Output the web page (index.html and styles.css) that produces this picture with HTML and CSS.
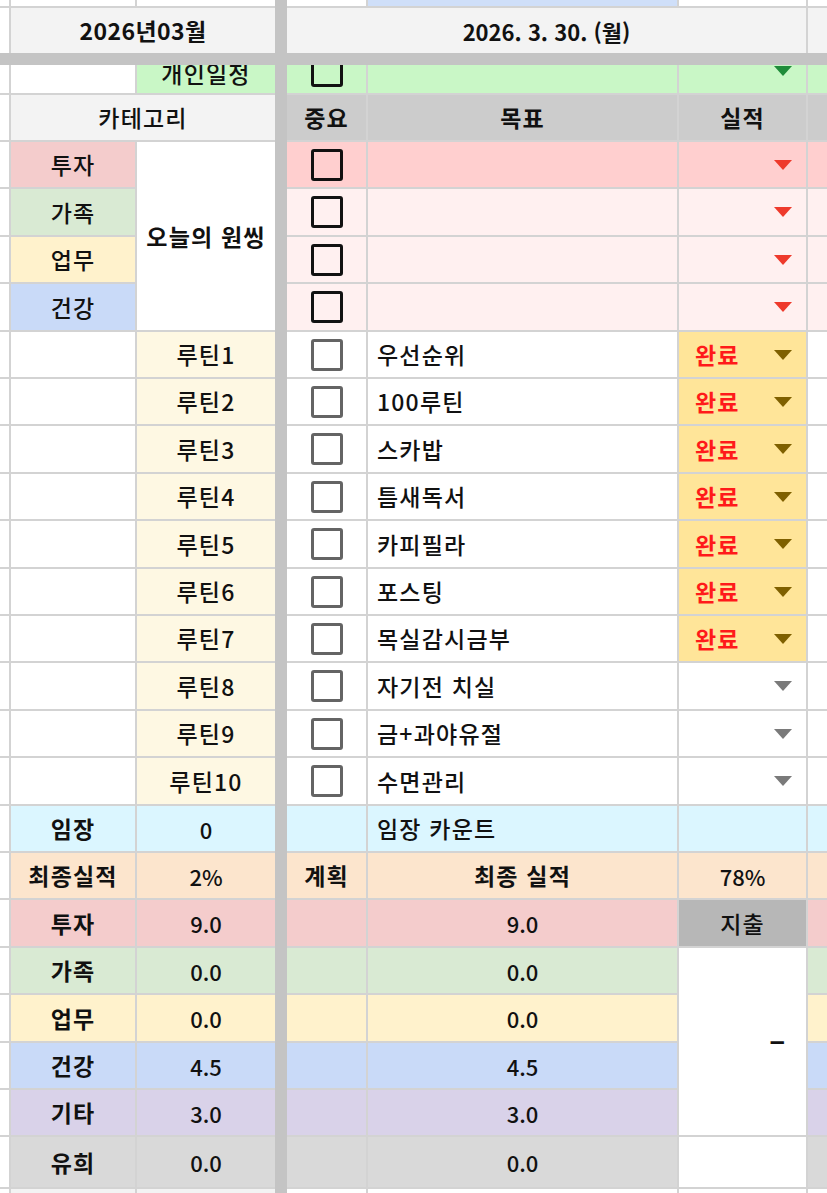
FILE: index.html
```html
<!DOCTYPE html>
<html lang="ko">
<head>
<meta charset="utf-8">
<title>2026년03월</title>
<link rel="stylesheet" href="styles.css">
</head>
<body>
<div class="sheet">
  <div class="vbar"></div>
  <div class="hbar"></div>

  <!-- partial top row -->
  <div class="c w"></div><div class="c w"></div><div class="c w"></div>
  <div class="c w"></div><div class="c bl"></div><div class="c w"></div><div class="c w"></div>

  <!-- header -->
  <div class="c w"></div>
  <div class="c lg b ctr s2 hdt">2026년03월</div>
  <div class="c lg b ctr s3 n">2026. 3. 30. (월)</div>
  <div class="c lg"></div>

  <!-- 개인일정 (partly scrolled) -->
  <div class="c w"></div>
  <div class="c w"></div>
  <div class="c gn cut"><div class="sh t ctr">개인일정</div></div>
  <div class="c gn cut"><div class="sh ctr"><span class="cb"></span></div></div>
  <div class="c gn"></div>
  <div class="c gn cut"><div class="sh"><span class="dd ddg"></span></div></div>
  <div class="c gn"></div>

  <!-- 카테고리 header -->
  <div class="c w"></div>
  <div class="c lg ctr s2">카테고리</div>
  <div class="c hd b ctr">중요</div>
  <div class="c hd b ctr">목표</div>
  <div class="c hd b ctr">실적</div>
  <div class="c hd"></div>

  <!-- one thing -->
  <div class="c w"></div>
  <div class="c tz ctr">투자</div>
  <div class="c w b ctr r4">오늘의 원씽</div>
  <div class="c tz2 ctr"><span class="cb"></span></div>
  <div class="c tz2"></div>
  <div class="c tz2"><span class="dd ddr"></span></div>
  <div class="c tz2"></div>

  <div class="c w"></div>
  <div class="c fm ctr">가족</div>
  <div class="c pk ctr"><span class="cb"></span></div>
  <div class="c pk"></div>
  <div class="c pk"><span class="dd ddr"></span></div>
  <div class="c pk"></div>

  <div class="c w"></div>
  <div class="c wk ctr">업무</div>
  <div class="c pk ctr"><span class="cb"></span></div>
  <div class="c pk"></div>
  <div class="c pk"><span class="dd ddr"></span></div>
  <div class="c pk"></div>

  <div class="c w"></div>
  <div class="c ht ctr">건강</div>
  <div class="c pk ctr"><span class="cb"></span></div>
  <div class="c pk"></div>
  <div class="c pk"><span class="dd ddr"></span></div>
  <div class="c pk"></div>

  <!-- routines -->
  <div class="c w"></div><div class="c w"></div>
  <div class="c cr ctr">루틴1</div>
  <div class="c w ctr"><span class="cb g"></span></div>
  <div class="c w lft">우선순위</div>
  <div class="c dn st"><span class="ok">완료</span><span class="dd ddo"></span></div>
  <div class="c w"></div>

  <div class="c w"></div><div class="c w"></div>
  <div class="c cr ctr">루틴2</div>
  <div class="c w ctr"><span class="cb g"></span></div>
  <div class="c w lft">100루틴</div>
  <div class="c dn st"><span class="ok">완료</span><span class="dd ddo"></span></div>
  <div class="c w"></div>

  <div class="c w"></div><div class="c w"></div>
  <div class="c cr ctr">루틴3</div>
  <div class="c w ctr"><span class="cb g"></span></div>
  <div class="c w lft">스카밥</div>
  <div class="c dn st"><span class="ok">완료</span><span class="dd ddo"></span></div>
  <div class="c w"></div>

  <div class="c w"></div><div class="c w"></div>
  <div class="c cr ctr">루틴4</div>
  <div class="c w ctr"><span class="cb g"></span></div>
  <div class="c w lft">틈새독서</div>
  <div class="c dn st"><span class="ok">완료</span><span class="dd ddo"></span></div>
  <div class="c w"></div>

  <div class="c w"></div><div class="c w"></div>
  <div class="c cr ctr">루틴5</div>
  <div class="c w ctr"><span class="cb g"></span></div>
  <div class="c w lft">카피필라</div>
  <div class="c dn st"><span class="ok">완료</span><span class="dd ddo"></span></div>
  <div class="c w"></div>

  <div class="c w"></div><div class="c w"></div>
  <div class="c cr ctr">루틴6</div>
  <div class="c w ctr"><span class="cb g"></span></div>
  <div class="c w lft">포스팅</div>
  <div class="c dn st"><span class="ok">완료</span><span class="dd ddo"></span></div>
  <div class="c w"></div>

  <div class="c w"></div><div class="c w"></div>
  <div class="c cr ctr">루틴7</div>
  <div class="c w ctr"><span class="cb g"></span></div>
  <div class="c w lft">목실감시금부</div>
  <div class="c dn st"><span class="ok">완료</span><span class="dd ddo"></span></div>
  <div class="c w"></div>

  <div class="c w"></div><div class="c w"></div>
  <div class="c cr ctr">루틴8</div>
  <div class="c w ctr"><span class="cb g"></span></div>
  <div class="c w lft">자기전 치실</div>
  <div class="c w"><span class="dd ddk"></span></div>
  <div class="c w"></div>

  <div class="c w"></div><div class="c w"></div>
  <div class="c cr ctr">루틴9</div>
  <div class="c w ctr"><span class="cb g"></span></div>
  <div class="c w lft">금+과야유절</div>
  <div class="c w"><span class="dd ddk"></span></div>
  <div class="c w"></div>

  <div class="c w"></div><div class="c w"></div>
  <div class="c cr ctr">루틴10</div>
  <div class="c w ctr"><span class="cb g"></span></div>
  <div class="c w lft">수면관리</div>
  <div class="c w"><span class="dd ddk"></span></div>
  <div class="c w"></div>

  <!-- 임장 -->
  <div class="c w"></div>
  <div class="c cy b ctr">임장</div>
  <div class="c cy ctr n">0</div>
  <div class="c cy"></div>
  <div class="c cy lft">임장 카운트</div>
  <div class="c cy"></div>
  <div class="c cy"></div>

  <!-- 최종실적 -->
  <div class="c w"></div>
  <div class="c pe b ctr">최종실적</div>
  <div class="c pe ctr n">2%</div>
  <div class="c pe b ctr">계획</div>
  <div class="c pe b ctr">최종 실적</div>
  <div class="c pe ctr n">78%</div>
  <div class="c pe"></div>

  <!-- summary -->
  <div class="c w"></div>
  <div class="c tz b ctr">투자</div>
  <div class="c tz ctr n">9.0</div>
  <div class="c tz"></div>
  <div class="c tz ctr n">9.0</div>
  <div class="c gy ctr">지출</div>
  <div class="c tz"></div>

  <div class="c w"></div>
  <div class="c fm b ctr">가족</div>
  <div class="c fm ctr n">0.0</div>
  <div class="c fm"></div>
  <div class="c fm ctr n">0.0</div>
  <div class="c w r4 dash"><span>–</span></div>
  <div class="c fm"></div>

  <div class="c w"></div>
  <div class="c wk b ctr">업무</div>
  <div class="c wk ctr n">0.0</div>
  <div class="c wk"></div>
  <div class="c wk ctr n">0.0</div>
  <div class="c wk"></div>

  <div class="c w"></div>
  <div class="c ht b ctr">건강</div>
  <div class="c ht ctr n">4.5</div>
  <div class="c ht"></div>
  <div class="c ht ctr n">4.5</div>
  <div class="c ht"></div>

  <div class="c w"></div>
  <div class="c et b ctr">기타</div>
  <div class="c et ctr n">3.0</div>
  <div class="c et"></div>
  <div class="c et ctr n">3.0</div>
  <div class="c et"></div>

  <div class="c w"></div>
  <div class="c fn b ctr">유희</div>
  <div class="c fn ctr n">0.0</div>
  <div class="c fn"></div>
  <div class="c fn ctr n">0.0</div>
  <div class="c w"></div>
  <div class="c fn"></div>

  <!-- partial bottom row -->
  <div class="c w"></div><div class="c lg"></div><div class="c lg"></div>
  <div class="c w"></div><div class="c w"></div><div class="c w"></div><div class="c w"></div>
</div>
</body>
</html>
```

FILE: styles.css
```css
html, body {
  margin: 0;
  padding: 0;
  background: #ffffff;
  overflow: hidden;
}

.sheet {
  width: 827px;
  height: 1193px;
  display: grid;
  grid-template-columns: 9px 124px 138px 8px 79px 309px 127px 19px;
  grid-template-rows:
    6px 45px 8px 28px 45px
    45px 46px 45px 46px 45px
    45px 46px 45px 46px 45px
    45px 46px 45px 46px 45px
    45px 46px 45px 46px 45px
    45px 50px 4px;
  gap: 2px;
  background: #d3d3d3;
  font-family: "Noto Sans CJK KR", "Noto Sans", sans-serif;
  font-size: 23px;
  font-weight: 500;
  letter-spacing: 1.2px;
  color: #111;
  overflow: hidden;
}

.vbar {
  grid-column: 4;
  grid-row: 1 / -1;
  margin: 0 -2px;
  background: #c4c4c4;
}

.hbar {
  grid-column: 1 / -1;
  grid-row: 3;
  margin: -2px 0;
  background: #c4c4c4;
}

.c {
  display: flex;
  align-items: center;
  overflow: hidden;
  line-height: 1;
  white-space: nowrap;
  min-width: 0;
}

.ctr { justify-content: center; }
.lft { padding-left: 9px; }
.b { font-weight: 700; }
.n { letter-spacing: 0; font-size: 22px; }
.hdt { letter-spacing: 0.4px; }
.s2 { grid-column: span 2; }
.s3 { grid-column: span 3; }
.r4 { grid-row: span 4; }

/* colours */
.w   { background: #ffffff; }
.lg  { background: #f3f3f3; }
.hd  { background: #cccccc; }
.bl  { background: #cfdff9; }
.gn  { background: #c9f7c6; }
.tz  { background: #f4cccc; }
.tz2 { background: #ffcfcf; }
.pk  { background: #fff0f0; }
.fm  { background: #d9ead3; }
.wk  { background: #fff2cc; }
.ht  { background: #c9daf8; }
.et  { background: #d9d2e9; }
.fn  { background: #d9d9d9; }
.cr  { background: #fef8e3; }
.dn  { background: #ffe599; }
.cy  { background: #dbf6ff; }
.pe  { background: #fce5cd; }
.gy  { background: #b7b7b7; }

/* scrolled-off row */
.cut { align-items: flex-start; }
.sh {
  flex: 1;
  height: 45px;
  margin-top: -17px;
  display: flex;
  align-items: center;
}
.sh.t { margin-top: -14px; }

/* checkbox */
.cb {
  display: block;
  width: 26px;
  height: 26px;
  border: 3px solid #111111;
  border-radius: 3px;
  box-sizing: content-box;
}
.cb.g { border-color: #646464; }

/* dropdown arrows */
.dd {
  display: block;
  margin-left: auto;
  margin-right: 14px;
  width: 0;
  height: 0;
  border-left: 9px solid transparent;
  border-right: 9px solid transparent;
  border-top: 10px solid #ee3a2c;
}
.ddr { border-top-color: #ee3a2c; }
.ddo { border-top-color: #7f6000; }
.ddk { border-top-color: #7a7a7a; }
.ddg { border-top-color: #1f8c3a; }

.st { padding-left: 16px; }
.ok {
  color: #ff1a1a;
  font-weight: 700;
}

.dash {
  justify-content: flex-end;
  padding-right: 20px;
  font-family: "Liberation Sans", sans-serif;
  font-size: 27px;
  font-weight: 700;
}
```
